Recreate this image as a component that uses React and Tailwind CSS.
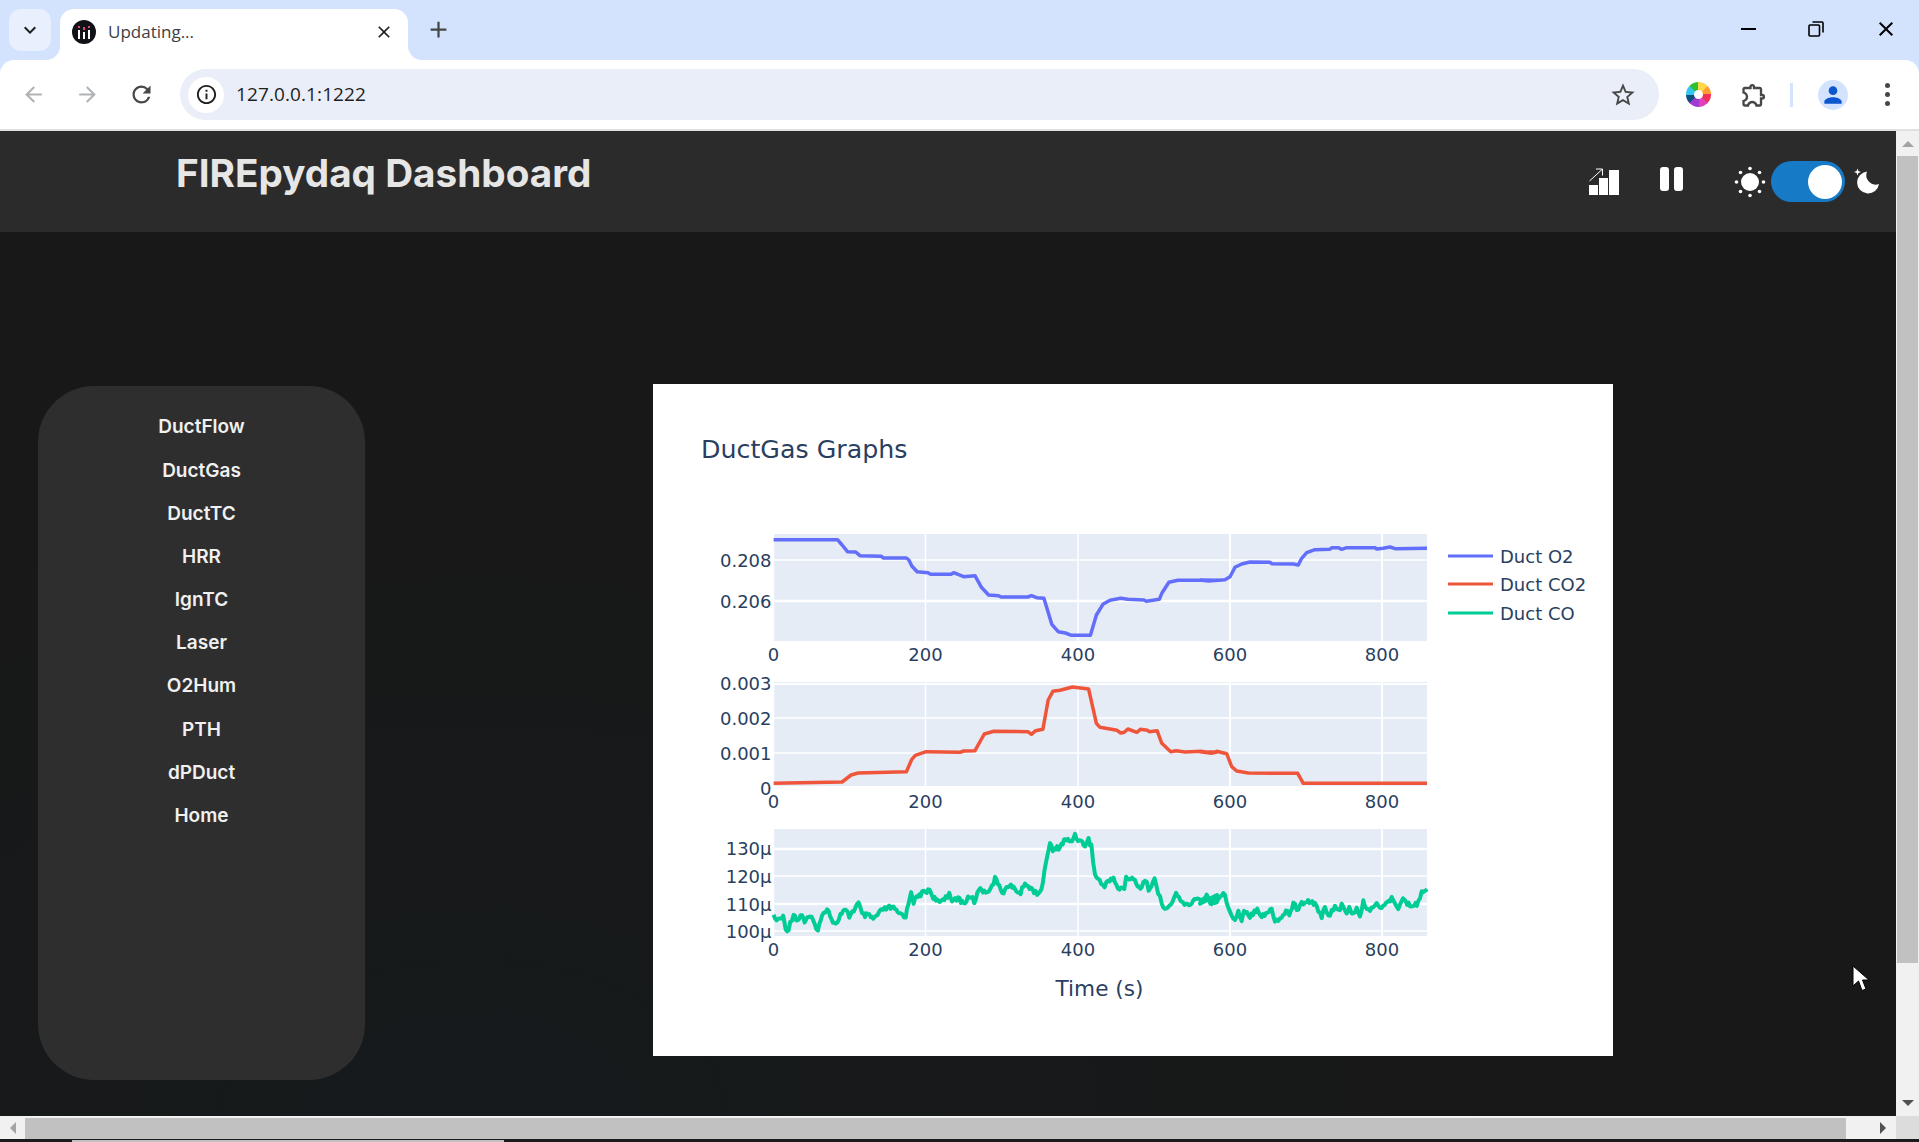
import { MdAdd, MdArrowBack, MdArrowForward, MdClose, MdInfoOutline, MdKeyboardArrowDown, MdOutlineExtension, MdPerson, MdRefresh, MdStarBorder } from "react-icons/md";

const navItems = ["DuctFlow", "DuctGas", "DuctTC", "HRR", "IgnTC", "Laser", "O2Hum", "PTH", "dPDuct", "Home"];

// points were read off the chart in page pixels: left half of the plot, then right half
const left = (ox, pts) => pts.map(([x, y]) => [660 + x / 2.8, ox + y / 3]);
const right = (oy, pts) => pts.map(([x, y]) => [1200 + x / 3, oy + y / 3]);
const toPath = (pts) => pts.map(([x, y]) => `${x.toFixed(1)},${y.toFixed(1)}`).join(" ");

// the CO trace is sensor noise, so fill the picked points out with a fixed jitter
const noisy = (pts) => {
  const out = [];
  let n = 0;
  for (let i = 0; i < pts.length - 1; i++) {
    const [x0, y0] = pts[i];
    const [x1, y1] = pts[i + 1];
    const steps = Math.max(1, Math.round((x1 - x0) / 1.5));
    for (let s = 0; s < steps; s++) {
      const r = Math.sin(++n * 12.9898) * 43758.5453;
      const j = (r - Math.floor(r) - 0.5) * 5;
      out.push([x0 + ((x1 - x0) * s) / steps, y0 + ((y1 - y0) * s) / steps + j]);
    }
  }
  out.push(pts[pts.length - 1]);
  return out;
};

const o2 = [
  ...left(500, [[318,119],[497,119],[510,135],[525,155],[548,156],[560,167],[620,169],[625,174],[690,174],[697,180],[705,198],[720,215],[750,218],[758,223],[815,223],[822,218],[832,222],[850,230],[882,227],[900,262],[920,285],[948,287],[955,291],[1030,291],[1040,287],[1055,293],[1075,295],[1097,373],[1115,395],[1135,399],[1152,406],[1205,406],[1222,345],[1240,313],[1260,301],[1290,295],[1310,298],[1355,300],[1362,304],[1398,298],[1405,280],[1425,247],[1450,241],[1560,241]]),
  ...right(510, [[0,210],[25,213],[75,209],[90,200],[105,172],[125,162],[150,156],[210,157],[215,161],[280,162],[295,165],[305,145],[320,128],[345,119],[390,118],[395,113],[415,113],[425,118],[440,113],[525,113],[530,117],[550,115],[570,111],[585,116],[681,115]]),
];

const co2 = [
  ...left(500, [[318,850],[510,846],[535,825],[555,819],[690,815],[705,778],[715,766],[745,755],[840,757],[850,753],[882,752],[908,702],[935,694],[1030,695],[1040,703],[1052,692],[1072,688],[1087,600],[1100,574],[1120,571],[1155,561],[1200,567],[1222,670],[1232,682],[1280,691],[1290,699],[1300,697],[1310,687],[1335,697],[1345,688],[1365,691],[1370,695],[1392,692],[1405,730],[1430,755],[1445,752],[1470,756],[1515,754],[1545,759],[1560,756]]),
  ...right(510, [[0,725],[35,730],[50,724],[80,731],[95,770],[110,783],[145,789],[293,790],[310,820],[681,820]]),
];

const co = noisy([
  ...left(790, [[318,368],[322,392],[345,382],[352,418],[360,416],[374,370],[385,392],[398,372],[405,395],[420,380],[442,418],[458,368],[468,352],[480,385],[492,405],[505,375],[520,362],[530,378],[556,340],[566,375],[590,380],[597,388],[625,358],[650,352],[665,368],[688,378],[695,345],[703,302],[710,335],[730,312],[755,298],[765,320],[780,340],[800,320],[810,312],[822,335],[835,325],[850,340],[870,318],[880,335],[897,290],[908,308],[925,295],[938,268],[950,285],[962,310],[975,285],[990,295],[1010,310],[1022,275],[1035,295],[1060,310],[1072,285],[1082,205],[1092,160],[1100,182],[1120,170],[1135,148],[1150,155],[1162,135],[1175,152],[1190,165],[1200,148],[1208,170],[1218,255],[1235,278],[1245,292],[1255,272],[1270,262],[1282,298],[1300,295],[1305,262],[1330,272],[1345,295],[1358,270],[1368,295],[1385,270],[1395,310],[1405,340],[1422,360],[1445,312],[1460,335],[1485,350],[1500,322],[1515,335],[1530,315],[1545,340],[1560,318]]),
  ...right(790, [[0,335],[20,318],[30,335],[50,338],[65,310],[75,320],[90,360],[105,392],[115,365],[125,390],[132,358],[150,378],[172,355],[185,378],[215,360],[225,392],[245,385],[258,358],[268,378],[280,338],[295,365],[300,345],[320,330],[345,340],[365,378],[375,358],[385,382],[405,345],[420,365],[425,345],[440,375],[448,350],[460,375],[470,352],[480,380],[490,338],[510,365],[525,340],[545,350],[575,328],[595,350],[605,328],[630,348],[655,340],[665,300],[681,297]]),
]);

const xTicks = [[773.5, "0"], [925.5, "200"], [1078, "400"], [1230, "600"], [1382, "800"]];

const plots = [
  { top: 534, bottom: 641, label: 661, mark: [682, 587], lines: [[560, 1.5], [601, 2.5]], ticks: [[560, "0.208"], [601, "0.206"]], color: "#636efa", pts: o2, w: 3.5 },
  { top: 682, bottom: 786, label: 808, mark: [735, 587], lines: [[684, 2], [718, 1.5], [753, 1.5]], ticks: [[683, "0.003"], [718, "0.002"], [753, "0.001"], [788, "0"]], color: "#ef553b", pts: co2, w: 3.5 },
  { top: 829, bottom: 936, label: 956, mark: [881, 594], lines: [[849, 2.5], [876, 1.5], [904, 2.5], [931, 1.5]], ticks: [[848, "130μ"], [876, "120μ"], [904, "110μ"], [931, "100μ"]], color: "#00cc96", pts: co, w: 4 },
];

const Plot = ({ top, bottom, label, mark, lines, ticks, color, pts, w }) => (
  <g>
    <rect x="773" y={top} width="654" height={bottom - top} fill="#e5ecf6" />
    {xTicks.map(([x]) => <line key={x} x1={x} x2={x} y1={top} y2={bottom} stroke="#fff" strokeWidth={x > 1200 ? 2 : 1.5} />)}
    {lines.map(([y, sw]) => <line key={y} x1="773" x2="1427" y1={y} y2={y} stroke="#fff" strokeWidth={sw} />)}
    <polyline points={toPath(pts)} fill="none" stroke={color} strokeWidth={w} strokeLinejoin="round" />
    {xTicks.map(([x, t]) => <text key={t} x={x} y={label} textAnchor="middle" fontSize="18" fill="#2a3f5f">{t}</text>)}
    {ticks.map(([y, t]) => <text key={t} x="771.5" y={y + 6.5} textAnchor="end" fontSize="18" fill="#2a3f5f">{t}</text>)}
    <rect x={mark[1] - 1} y={mark[0] - 3.5} width="2" height="7" fill="#2a3f5f" />
  </g>
);

const Chart = () => (
  <svg viewBox="653 384 960 672" className="block w-[960px] h-[672px] font-['DejaVu_Sans',sans-serif]">
    <text x="701" y="458" fontSize="25.3" fill="#2a3f5f">DuctGas Graphs</text>
    {plots.map((p) => <Plot key={p.color} {...p} />)}
    <text x="1099.5" y="996" textAnchor="middle" fontSize="21.6" fill="#2a3f5f">Time (s)</text>
    {[[556, "#636efa", "Duct O2"], [584, "#ef553b", "Duct CO2"], [613, "#00cc96", "Duct CO"]].map(([y, c, t]) => (
      <g key={t}>
        <line x1="1448" x2="1493" y1={y} y2={y} stroke={c} strokeWidth="3" />
        <text x="1500" y={y + 6.5} fontSize="18" fill="#2a3f5f">{t}</text>
      </g>
    ))}
  </svg>
);

const Favicon = () => (
  <svg viewBox="0 0 24 24" className="w-6 h-6 shrink-0">
    <circle cx="12" cy="12" r="12" fill="#111118" />
    <rect x="6" y="10" width="2" height="9" fill="#fff" />
    <rect x="6" y="6" width="2" height="2" fill="#e0457b" />
    <rect x="11" y="12" width="2" height="7" fill="#fff" />
    <rect x="11" y="7" width="2" height="3" fill="#e0457b" />
    <rect x="16" y="10" width="2" height="9" fill="#fff" />
    <rect x="16" y="6" width="2" height="2" fill="#e0457b" />
  </svg>
);

const TabStrip = () => (
  <div className="h-[60px] bg-[#d3e3fd] flex items-start pt-[9px] pl-[9px]">
    <div className="w-[42px] h-[42px] rounded-xl bg-[#e8f0fe] flex items-center justify-center text-[#1f1f1f]">
      <MdKeyboardArrowDown size={24} />
    </div>
    <div className="relative ml-[9px] w-[348px] h-[51px] bg-white rounded-t-[14px] flex items-center pl-3 pr-[14px] pb-[6px]">
      <svg viewBox="0 0 14 14" className="absolute -left-[14px] bottom-0 w-[14px] h-[14px]"><path d="M14 0V14H0A14 14 0 0 0 14 0Z" fill="#fff" /></svg>
      <svg viewBox="0 0 14 14" className="absolute -right-[14px] bottom-0 w-[14px] h-[14px]"><path d="M0 0V14H14A14 14 0 0 1 0 0Z" fill="#fff" /></svg>
      <Favicon />
      <span className="ml-3 text-[17px] text-[#3c4043] font-['Open_Sans',sans-serif] leading-none">Updating...</span>
      <MdClose size={20} className="ml-auto text-[#1f1f1f]" />
    </div>
    <MdAdd size={27} className="ml-[17px] mt-[7px] text-[#444746]" />
    <div className="ml-auto flex items-center h-10 text-black">
      <div className="w-[15px] h-[2px] bg-black mr-[52px]" />
      <svg viewBox="0 0 16 16" className="w-4 h-4 mr-[50px]" fill="none" stroke="#000" strokeWidth="1.6">
        <rect x="1" y="4" width="10.5" height="11" rx="1" />
        <path d="M4.5 1H14a1 1 0 0 1 1 1v9.5" />
      </svg>
      <MdClose size={24} className="mr-[21px]" />
    </div>
  </div>
);

const Toolbar = () => (
  <div className="h-[69px] bg-[#d3e3fd]">
    <div className="h-full bg-white rounded-t-[14px] flex items-center pl-[15px]">
      <div className="w-9 flex justify-center text-[#b0b3b5]"><MdArrowBack size={25} /></div>
      <div className="w-9 ml-[18px] flex justify-center text-[#b0b3b5]"><MdArrowForward size={25} /></div>
      <div className="w-9 ml-[18px] flex justify-center text-[#474747]"><MdRefresh size={27} /></div>
      <div className="ml-[21px] w-[1479px] h-[51px] rounded-full bg-[#e9eef8] flex items-center pl-2 pr-[22px]">
        <div className="w-9 h-9 rounded-full bg-white flex items-center justify-center text-[#1f1f1f]"><MdInfoOutline size={23} /></div>
        <span className="ml-[12px] text-[19px] tracking-[0.1px] text-[#1f1f1f] font-['Open_Sans',sans-serif] leading-none">127.0.0.1:1222</span>
        <MdStarBorder size={28} className="ml-auto text-[#474747]" />
      </div>
      <div className="ml-[27px] w-[25px] h-[25px] rounded-full bg-[conic-gradient(#ffd54a_0deg_45deg,#ff9d2e_45deg_90deg,#f0305a_90deg_135deg,#e040c0_135deg_180deg,#a13ad0_180deg_225deg,#0f4c81_225deg_270deg,#33c5f0_270deg_315deg,#2fc02f_315deg_360deg)] flex items-center justify-center">
        <div className="w-[9px] h-[9px] rounded-full bg-white" />
      </div>
      <MdOutlineExtension size={28} className="ml-[29px] text-[#474747]" />
      <div className="ml-[22px] w-[3px] h-[24px] bg-[#d3e3fd]" />
      <div className="ml-[25px] w-[30px] h-[30px] rounded-full bg-[#d3e3fd] flex items-center justify-center text-[#0b57d0]"><MdPerson size={26} /></div>
      <div className="ml-[37px] flex flex-col gap-[4px]">
        <div className="w-[5px] h-[5px] rounded-full bg-[#474747]" />
        <div className="w-[5px] h-[5px] rounded-full bg-[#474747]" />
        <div className="w-[5px] h-[5px] rounded-full bg-[#474747]" />
      </div>
    </div>
  </div>
);

const BarsIcon = () => (
  <svg viewBox="0 0 30 27" className="w-[30px] h-[27px]" fill="#fff">
    <rect x="0" y="17" width="9" height="10" />
    <rect x="10" y="10" width="9" height="17" />
    <rect x="20" y="2" width="10" height="25" />
    <path d="M0.5 13L13 1.5M7 1H13.5V7.5" fill="none" stroke="#fff" strokeWidth="1" />
  </svg>
);

const SunIcon = () => (
  <svg viewBox="0 0 32 32" className="w-[32px] h-[32px]" fill="#fff">
    <circle cx="16" cy="16" r="9" />
    <circle cx="16" cy="2.5" r="1.8" />
    <circle cx="16" cy="29.5" r="1.8" />
    <circle cx="2.5" cy="16" r="1.8" />
    <circle cx="29.5" cy="16" r="1.8" />
    <circle cx="6.5" cy="6.5" r="1.8" />
    <circle cx="25.5" cy="6.5" r="1.8" />
    <circle cx="6.5" cy="25.5" r="1.8" />
    <circle cx="25.5" cy="25.5" r="1.8" />
  </svg>
);

const MoonIcon = () => (
  <svg viewBox="0 0 28 28" className="w-7 h-7" fill="#fff">
    <path d="M13 3.5A11 11 0 1 0 25 16A9.5 9.5 0 0 1 13 3.5Z" />
    <path d="M3.5 0.5L4.4 3.1L7 4L4.4 4.9L3.5 7.5L2.6 4.9L0 4L2.6 3.1Z" />
  </svg>
);

const Header = () => (
  <div className="h-[101px] bg-[#2b2b2b] flex items-start">
    <h1 className="ml-[176px] mt-[18px] font-['Inter',sans-serif] font-bold text-[38.7px] leading-[48px] text-[#e6e6e6] whitespace-nowrap">FIREpydaq Dashboard</h1>
    <div className="ml-auto mr-[14px] mt-[30px] flex items-center h-[41px]">
      <BarsIcon />
      <div className="ml-[41px] -mt-[5px] flex gap-[5px]">
        <div className="w-[9px] h-[24px] rounded-[3px] bg-white" />
        <div className="w-[9px] h-[24px] rounded-[3px] bg-white" />
      </div>
      <div className="ml-[51px]"><SunIcon /></div>
      <div className="ml-[5px] w-[74px] h-[41px] rounded-full bg-[#167ac6] flex items-center justify-end pr-[3px]">
        <div className="w-[34px] h-[34px] rounded-full bg-white" />
      </div>
      <div className="ml-[9px]"><MoonIcon /></div>
    </div>
  </div>
);

const Sidebar = () => (
  <div className="ml-[38px] mt-[154px] w-[327px] h-[694px] shrink-0 rounded-[56px] bg-[#2e2e2e] pt-[20px] flex flex-col items-center">
    {navItems.map((n) => (
      <div key={n} className="h-[43.2px] flex items-center font-['Inter',sans-serif] font-semibold text-[19px] text-[#f0f0f0]">{n}</div>
    ))}
  </div>
);

const Scrollbars = {
  V: () => (
    <div className="w-[23px] bg-[#f1f1f1] flex flex-col items-center">
      <div className="h-[25px] flex items-center justify-center">
        <div className="w-0 h-0 border-x-[6px] border-x-transparent border-b-[6px] border-b-[#a3a3a3]" />
      </div>
      <div className="w-[21px] h-[807px] bg-[#c1c1c1]" />
      <div className="flex-1 flex items-end pb-[10px]">
        <div className="w-0 h-0 border-x-[6px] border-x-transparent border-t-[6px] border-t-[#505050]" />
      </div>
    </div>
  ),
  H: () => (
    <div className="h-[23px] bg-[#f1f1f1] flex items-center">
      <div className="w-[25px] flex items-center justify-center">
        <div className="w-0 h-0 border-y-[6px] border-y-transparent border-r-[6px] border-r-[#a3a3a3]" />
      </div>
      <div className="w-[1821px] h-[21px] bg-[#c1c1c1] mt-[2px]" />
      <div className="flex-1 flex items-center justify-center pl-[24px]">
        <div className="w-0 h-0 border-y-[6px] border-y-transparent border-l-[6px] border-l-[#505050]" />
      </div>
      <div className="w-[23px] h-full bg-[#dcdcdc]" />
    </div>
  ),
};

const Cursor = () => (
  <svg viewBox="0 0 18 27" className="absolute left-[1852px] top-[965px] w-[18px] h-[27px]">
    <path d="M1 1V21L6.5 16L10 25.5L14 24L10.5 15H17Z" fill="#fff" stroke="#000" strokeWidth="1" />
  </svg>
);

export default function App() {
  return (
    <div className="relative w-[1919px] h-[1142px] overflow-hidden bg-[#1a1a1a] flex flex-col">
      <TabStrip />
      <Toolbar />
      <div className="h-[2px] bg-[#e0e0e0]" />
      <div className="h-[985px] flex">
        <div className="flex-1 flex flex-col min-w-0">
          <Header />
          <div className="flex-1 bg-[#181818] bg-[radial-gradient(ellipse_at_25%_100%,#161a1c,#181818_50%)] flex items-start">
            <Sidebar />
            <div className="ml-[288px] mt-[152px] w-[960px] h-[672px] bg-white shrink-0">
              <Chart />
            </div>
          </div>
        </div>
        <Scrollbars.V />
      </div>
      <Scrollbars.H />
      <div className="h-[2px] bg-[#1a1a1a] pl-[72px] mt-[1px]">
        <div className="w-[432px] h-full bg-[#c0c0c0]" />
      </div>
      <Cursor />
    </div>
  );
}
